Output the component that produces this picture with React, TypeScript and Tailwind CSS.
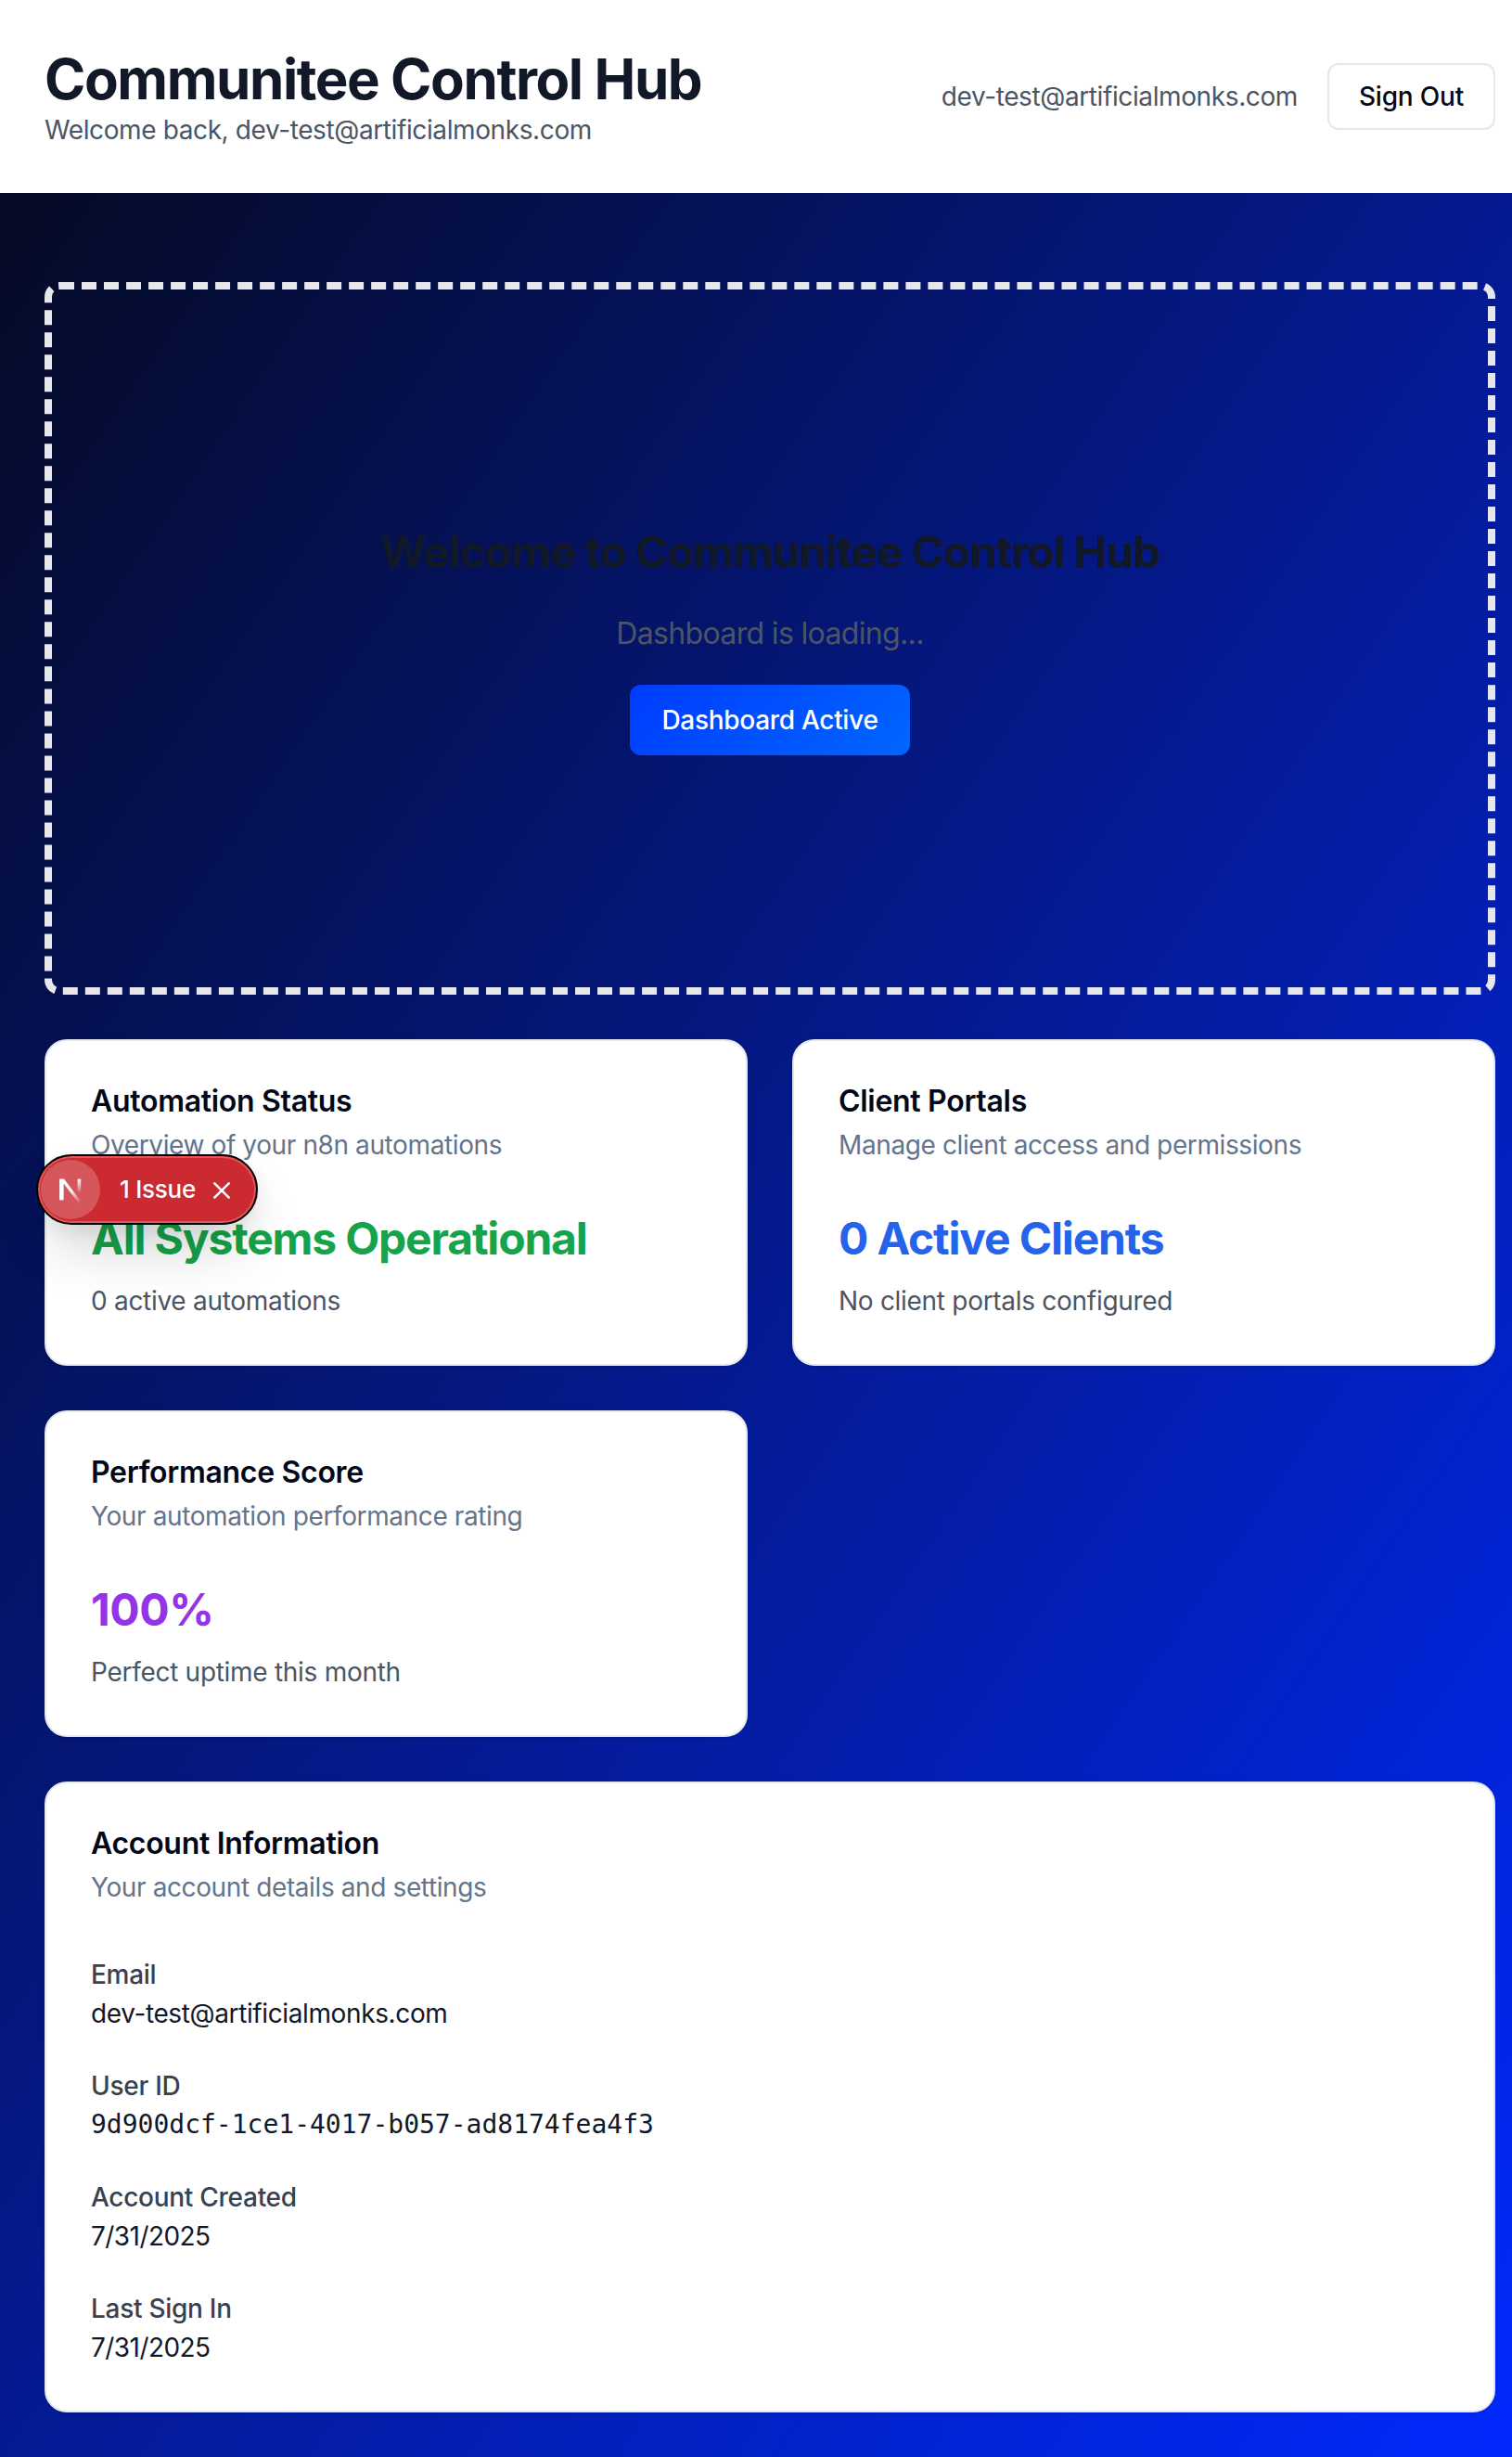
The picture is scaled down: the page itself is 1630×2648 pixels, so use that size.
import React from "react";

function Card({ title, description, children }: { title: string; description: string; children: React.ReactNode }) {
  return (
    <section className="rounded-[24px] border-2 border-[#e2e8f0] bg-white p-12 shadow-sm">
      <h3 className="pt-0.5 text-[32px] leading-[30px] font-semibold tracking-[-0.3px] text-[#020817]">{title}</h3>
      <p className="mt-3 text-[28px] leading-10 tracking-[-0.39px] text-[#64748b]">{description}</p>
      <div className="mt-12">{children}</div>
    </section>
  );
}

function Metric({ value, note, color }: { value: string; note: string; color: string }) {
  return (
    <>
      <div className={`pt-0.5 text-[48px] leading-[62px] font-bold ${color}`}>{value}</div>
      <p className="mt-4 text-[28px] leading-10 tracking-[-0.29px] text-[#4b5563]">{note}</p>
    </>
  );
}

function Field({ label, value, font }: { label: string; value: string; font: string }) {
  return (
    <div>
      <div className="pt-1 text-[28px] leading-[44px] font-medium tracking-[-0.28px] text-[#374151]">{label}</div>
      <p className={`text-[28px] leading-10 text-[#111827] ${font}`}>{value}</p>
    </div>
  );
}

function IssueBadge() {
  return (
    <div className="absolute top-[1244px] left-[39px] flex h-[76px] w-[239px] items-center rounded-full border-2 border-black bg-[#ca2a30] pl-[3px] shadow-[inset_0_0_0_2px_#e0565b,0_32px_64px_-16px_rgba(0,0,0,0.24),0_8px_20px_rgba(0,0,0,0.08)]">
      <span className="flex h-16 w-16 items-center justify-center rounded-full bg-[#d5575c]">
        <svg width="26" height="28" viewBox="0 0 26 28" fill="none" className="overflow-visible">
          <defs>
            <linearGradient id="diag" x1="14" y1="14" x2="23" y2="28" gradientUnits="userSpaceOnUse">
              <stop stopColor="#fff" />
              <stop offset="1" stopColor="#fff" stopOpacity="0" />
            </linearGradient>
            <linearGradient id="stem" x1="0" y1="3" x2="0" y2="18" gradientUnits="userSpaceOnUse">
              <stop stopColor="#fff" />
              <stop offset="1" stopColor="#fff" stopOpacity="0" />
            </linearGradient>
          </defs>
          <path d="M2.8 2.7H6.2L24.3 26.8L21.6 28.6L5.4 7.2V25.3H1.2V2.7Z" fill="url(#diag)" />
          <path d="M1.2 2.7H5.4V25.3H1.2Z" fill="#fff" />
          <path d="M20.6 2.7H24.2V18H20.6Z" fill="url(#stem)" />
        </svg>
      </span>
      <span className="ml-[21px] w-[83px] text-[26px] leading-8 font-medium tracking-[-0.01em] whitespace-nowrap text-white">1 Issue</span>
      <svg className="mt-0.5 ml-[17px]" width="20" height="20" viewBox="0 0 20 20" fill="none" stroke="#fff" strokeWidth="2.6" strokeLinecap="round">
        <path d="M2.3 2.3L17.7 17.7M17.7 2.3L2.3 17.7" />
      </svg>
    </div>
  );
}

export default function App() {
  return (
    <div className="relative h-[2648px] w-[1630px] overflow-hidden font-['Inter',sans-serif]">
      <div className="flex h-full w-[1660px] flex-col">
        <header className="flex h-[208px] shrink-0 items-center justify-between bg-white px-12">
          <div>
            <h1 className="pt-0.5 text-[60px] leading-[70px] font-bold tracking-[-1.42px] text-[#111827]">Communitee Control Hub</h1>
            <p className="text-[28px] leading-10 tracking-[-0.39px] text-[#4b5563]">Welcome back, dev-test@artificialmonks.com</p>
          </div>
          <div className="flex items-center gap-8">
            <span className="text-[28px] leading-10 tracking-[-0.39px] text-[#4b5563]">dev-test@artificialmonks.com</span>
            <button className="h-[72px] rounded-[12px] border-2 border-[#e5e7eb] bg-white px-8 text-[28px] leading-10 font-medium tracking-[-0.2px] text-[#020817]">Sign Out</button>
          </div>
        </header>
        <main className="flex flex-1 flex-col gap-12 bg-[linear-gradient(to_bottom_right,#050a24_0%,#041a92_50%,#0029ff_100%)] px-12 pt-24">
          <section className="flex h-[768px] shrink-0 flex-col items-center justify-center rounded-[16px] border-8 border-dashed border-[#e5e7eb]">
            <h2 className="pt-0.5 text-[48px] leading-[62px] font-bold tracking-[-1.2px] text-[#111827]">Welcome to Communitee Control Hub</h2>
            <p className="mt-8 pt-0.5 text-[32px] leading-[46px] tracking-[-0.65px] text-[#4b5563]">Dashboard is loading...</p>
            <button className="mt-8 h-[76px] rounded-[12px] bg-[linear-gradient(135deg,#003cff,#0066ff)] px-[34px] text-[28px] leading-10 font-medium tracking-[-0.3px] text-white">Dashboard Active</button>
          </section>
          <div className="grid shrink-0 grid-cols-2 gap-12">
            <Card title="Automation Status" description="Overview of your n8n automations">
              <Metric value="All Systems Operational" note="0 active automations" color="text-[#16a34a] tracking-[-1.17px]" />
            </Card>
            <Card title="Client Portals" description="Manage client access and permissions">
              <Metric value="0 Active Clients" note="No client portals configured" color="text-[#2563eb] tracking-[-1.17px]" />
            </Card>
            <Card title="Performance Score" description="Your automation performance rating">
              <Metric value="100%" note="Perfect uptime this month" color="text-[#9333ea] tracking-[-0.4px]" />
            </Card>
          </div>
          <Card title="Account Information" description="Your account details and settings">
            <div className="flex flex-col gap-8">
              <Field label="Email" value="dev-test@artificialmonks.com" font="tracking-[-0.38px]" />
              <Field label="User ID" value="9d900dcf-1ce1-4017-b057-ad8174fea4f3" font="font-['DejaVu_Sans_Mono',monospace]" />
              <Field label="Account Created" value="7/31/2025" font="tracking-[-0.56px]" />
              <Field label="Last Sign In" value="7/31/2025" font="tracking-[-0.56px]" />
            </div>
          </Card>
        </main>
      </div>
      <IssueBadge />
    </div>
  );
}
